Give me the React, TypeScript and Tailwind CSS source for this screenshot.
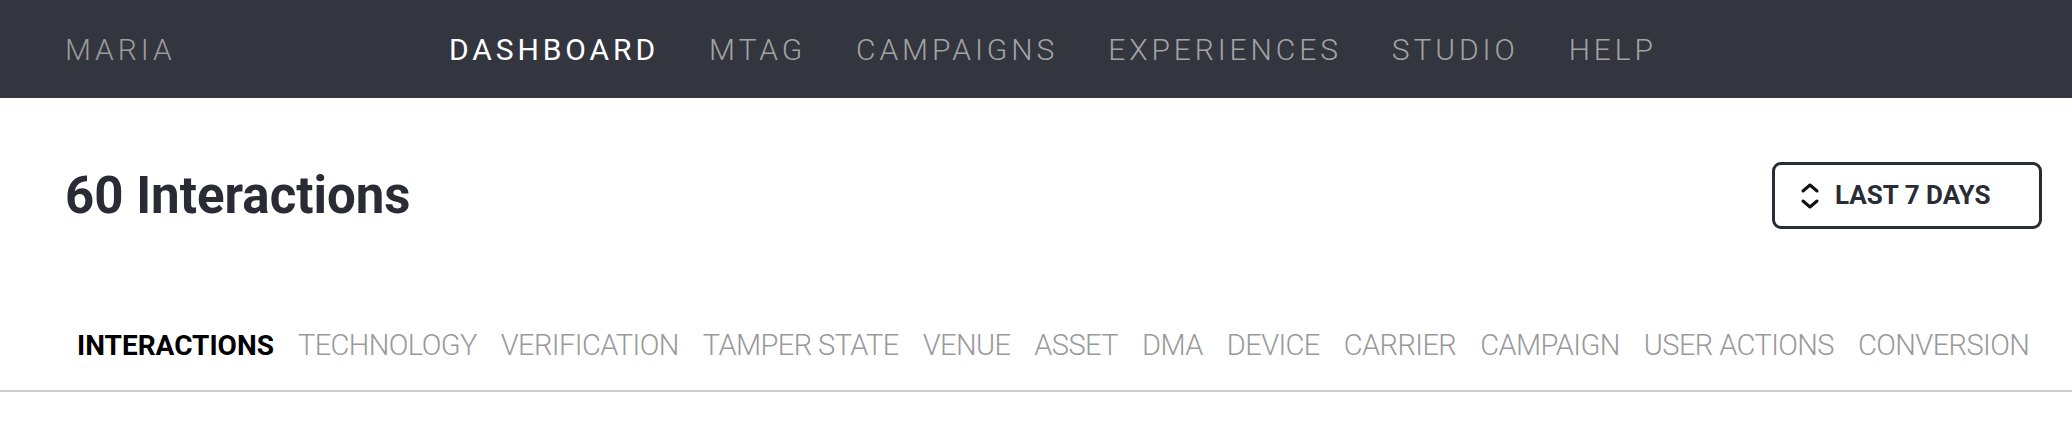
const navLinks = ["DASHBOARD", "MTAG", "CAMPAIGNS", "EXPERIENCES", "STUDIO", "HELP"];

const tabs = [
  "INTERACTIONS",
  "TECHNOLOGY",
  "VERIFICATION",
  "TAMPER STATE",
  "VENUE",
  "ASSET",
  "DMA",
  "DEVICE",
  "CARRIER",
  "CAMPAIGN",
  "USER ACTIONS",
  "CONVERSION",
];

const UpDownIcon = () => (
  <svg width="22" height="30" viewBox="0 0 22 30" fill="none" stroke="#111" strokeWidth="3" strokeLinecap="round" strokeLinejoin="round">
    <path d="M4 10 L11 4 L18 10" />
    <path d="M4 20 L11 26 L18 20" />
  </svg>
);

const App = () => {
  return (
    <div className="min-h-screen bg-white font-['Roboto',sans-serif]">
      <nav className="flex items-center h-[98px] bg-[#33353f] px-[65px]">
        <div className="w-[384px] text-[30px] font-light tracking-[0.13em] text-[#9b9b9b]">
          MARIA
        </div>
        <div className="flex items-center gap-[50px]">
          {navLinks.map((link, i) => (
            <a
              key={link}
              href="#"
              className={
                i === 0
                  ? "text-[30px] tracking-[0.13em] text-white"
                  : "text-[30px] font-light tracking-[0.13em] text-[#a3a3a3]"
              }
            >
              {link}
            </a>
          ))}
        </div>
      </nav>

      <div className="flex items-center justify-between pl-[65px] pr-[30px] pt-[64px]">
        <h1 className="text-[51px] font-bold leading-none text-[#2a2c35]">60 Interactions</h1>
        <button className="flex items-center gap-[14px] w-[270px] h-[67px] px-6 border-[3px] border-[#2a2c35] rounded-[9px] text-[26px] font-bold text-[#2a2c35]">
          <UpDownIcon />
          LAST 7 DAYS
        </button>
      </div>

      <div className="flex items-center gap-[24px] px-[77px] pt-[95px] pb-[22px] border-b-2 border-[#cccccc] whitespace-nowrap">
        {tabs.map((tab, i) => (
          <span
            key={tab}
            className={
              i === 0
                ? "shrink-0 text-[28px] font-bold text-black"
                : "shrink-0 text-[29px] font-light tracking-[-0.02em] text-[#999999]"
            }
          >
            {tab}
          </span>
        ))}
      </div>
    </div>
  );
};

export default App;
